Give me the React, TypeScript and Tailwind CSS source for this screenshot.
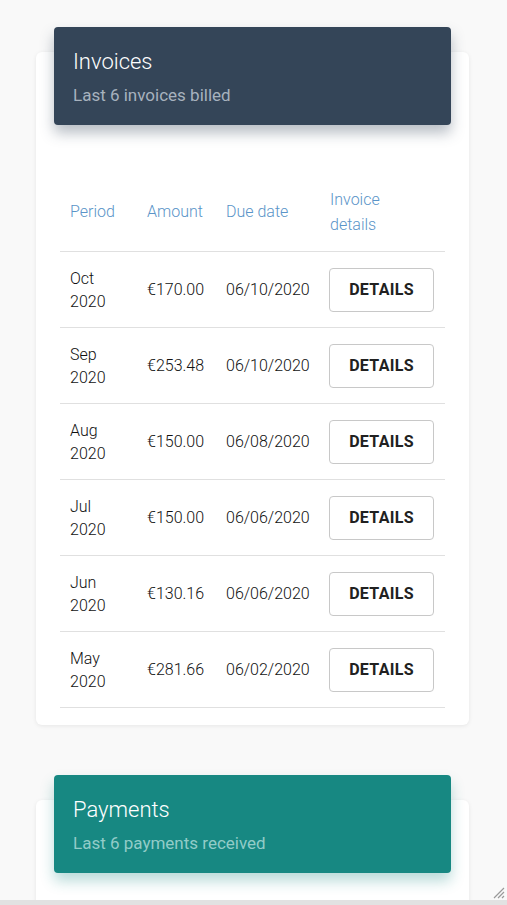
import React from 'react';

const invoices = [
  { month: 'Oct', year: '2020', amount: '€170.00', due: '06/10/2020' },
  { month: 'Sep', year: '2020', amount: '€253.48', due: '06/10/2020' },
  { month: 'Aug', year: '2020', amount: '€150.00', due: '06/08/2020' },
  { month: 'Jul', year: '2020', amount: '€150.00', due: '06/06/2020' },
  { month: 'Jun', year: '2020', amount: '€130.16', due: '06/06/2020' },
  { month: 'May', year: '2020', amount: '€281.66', due: '06/02/2020' },
];

const cols = 'grid grid-cols-[77px_79px_104px_125px] items-center border-b border-[#e0e0e0]';

function CardHeader({ title, subtitle, tone }: { title: string; subtitle: string; tone: 'slate' | 'teal' }) {
  const bg = tone === 'slate' ? 'bg-[#344558] shadow-[0_8px_14px_rgba(52,69,88,0.35)]' : 'bg-[#178882] shadow-[0_8px_14px_rgba(23,136,130,0.3)]';
  const sub = tone === 'slate' ? 'text-[#a7b2be]' : 'text-[#92ccc8]';
  return (
    <div className={`mx-[18px] -mt-[25px] h-[98px] rounded-[4px] px-[19px] pt-[20px] ${bg}`}>
      <h2 className="text-[22px] font-light leading-[30px] text-white">{title}</h2>
      <p className={`mt-[6px] text-[17px] font-normal leading-[24px] ${sub}`}>{subtitle}</p>
    </div>
  );
}

export default function App() {
  return (
    <div className="h-[905px] overflow-hidden bg-[#f9f9f9] font-['Roboto',sans-serif]">
      <div className="relative h-[900px] overflow-hidden px-[36px] pt-[52px]">
        {/* Invoices */}
        <section className="flow-root w-[433px] rounded-[6px] bg-white pb-[17px] shadow-[0_1px_4px_rgba(0,0,0,0.08)]">
          <CardHeader title="Invoices" subtitle="Last 6 invoices billed" tone="slate" />

          <div className="mx-[24px] mt-[47px]">
            <div className={`${cols} h-[80px] text-[16px] font-light leading-[25px] text-[#5a94c8]`}>
              <div className="pl-[10px]">Period</div>
              <div className="pl-[10px]">Amount</div>
              <div className="pl-[10px]">Due date</div>
              <div className="pl-[10px]">Invoice<br />details</div>
            </div>
            {invoices.map((inv) => (
              <div key={inv.month} className={`${cols} h-[76px] text-[16px] font-light leading-[23px] text-[#111111]`}>
                <div className="pl-[10px]">{inv.month}<br />{inv.year}</div>
                <div className="pl-[10px]">{inv.amount}</div>
                <div className="pl-[10px]">{inv.due}</div>
                <div className="pl-[9px]">
                  <button className="h-[44px] w-[105px] rounded-[4px] border border-[#c8c8c8] bg-white text-[16px] font-bold tracking-[0.3px] text-[#212121]">
                    DETAILS
                  </button>
                </div>
              </div>
            ))}
          </div>
        </section>

        {/* Payments */}
        <section className="mt-[75px] flow-root h-[200px] w-[433px] rounded-[6px] bg-white shadow-[0_1px_4px_rgba(0,0,0,0.08)]">
          <CardHeader title="Payments" subtitle="Last 6 payments received" tone="teal" />
        </section>

        <svg className="absolute bottom-[1px] right-[2px]" width="14" height="14" viewBox="0 0 14 14">
          <path d="M13 3 L3 13 M13 7 L7 13 M13 11 L11 13" stroke="#9a9a9a" strokeWidth="1.2" />
        </svg>
      </div>
      <div className="h-[5px] bg-[#e2e2e2]" />
    </div>
  );
}
